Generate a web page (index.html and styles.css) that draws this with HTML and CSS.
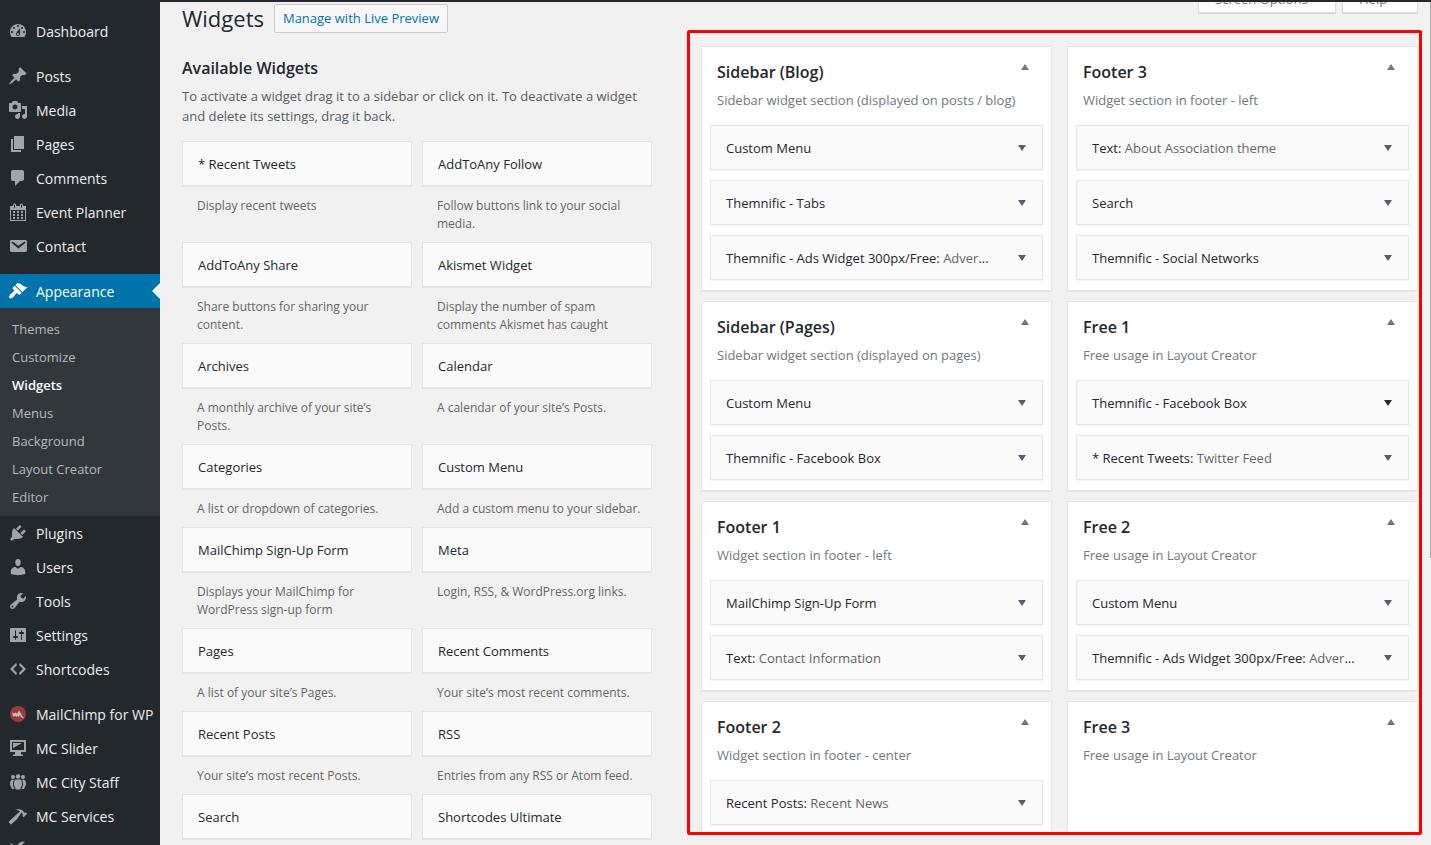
FILE: index.html
```html
<!DOCTYPE html>
<html lang="en">
<head>
<meta charset="utf-8">
<meta name="viewport" content="width=device-width, initial-scale=1">
<title>Widgets</title>
<link rel="stylesheet" href="styles.css">
</head>
<body>
<svg class="defs" aria-hidden="true">
  <symbol id="up" viewBox="0 0 8 6"><path d="M4 0l4 6H0z"/></symbol>
  <symbol id="down" viewBox="0 0 8 6"><path d="M0 0h8L4 6z"/></symbol>
</svg>
<div class="topbar"></div>
<div class="shell">
  <nav class="menu" aria-label="Main menu">
    <ul class="menu-group">
      <li><a class="menu-link" href="#"><svg viewBox="0 0 20 20"><path d="M3.76 16h12.48c1.1-1.37 1.76-3.11 1.76-5 0-4.42-3.58-8-8-8s-8 3.58-8 8c0 1.89.66 3.63 1.76 5zM10 4c.55 0 1 .45 1 1s-.45 1-1 1-1-.45-1-1 .45-1 1-1zM6 6c.55 0 1 .45 1 1s-.45 1-1 1-1-.45-1-1 .45-1 1-1zm8 0c.55 0 1 .45 1 1s-.45 1-1 1-1-.45-1-1 .45-1 1-1zm-5.37 5.55L12 7v6c0 1.1-.9 2-2 2s-2-.9-2-2c0-.57.24-1.08.63-1.45zM4 10c.55 0 1 .45 1 1s-.45 1-1 1-1-.45-1-1 .45-1 1-1zm12 0c.55 0 1 .45 1 1s-.45 1-1 1-1-.45-1-1 .45-1 1-1zm-5 3c0-.55-.45-1-1-1s-1 .45-1 1 .45 1 1 1 1-.45 1-1z"/></svg><span>Dashboard</span></a></li>
    </ul>
    <ul class="menu-group">
      <li><a class="menu-link" href="#"><svg viewBox="0 0 20 20"><path d="M10.44 3.02l1.82-1.82 6.36 6.35-1.83 1.82c-1.05-.68-2.48-.57-3.41.36l-.75.75c-.92.93-1.04 2.35-.35 3.41l-1.83 1.82-2.41-2.41-2.8 2.79c-.42.42-3.38 2.71-3.8 2.29s1.86-3.39 2.28-3.81l2.79-2.79L4.1 9.36l1.83-1.82c1.05.69 2.48.57 3.4-.36l.75-.75c.93-.92 1.05-2.35.36-3.41z"/></svg><span>Posts</span></a></li>
      <li><a class="menu-link" href="#"><svg viewBox="0 0 20 20"><path d="M13 11V4c0-.55-.45-1-1-1h-1.67L9 1H5L3.67 3H2c-.55 0-1 .45-1 1v7c0 .55.45 1 1 1h10c.55 0 1-.45 1-1zM7 4.500c1.380 0 2.500 1.120 2.500 2.500S8.380 9.500 7 9.500 4.500 8.380 4.500 7 5.620 4.500 7 4.500zM14 6h5v10.500c0 1.380-1.120 2.500-2.500 2.500S14 17.880 14 16.500s1.120-2.500 2.500-2.500c.17 0 .34.02.5.05V9h-3V6zm-4 8.050V13h2v3.500c0 1.380-1.120 2.500-2.500 2.500S7 17.880 7 16.500 8.120 14 9.500 14c.17 0 .34.02.5.05z"/></svg><span>Media</span></a></li>
      <li><a class="menu-link" href="#"><svg viewBox="0 0 20 20"><path d="M6 15V2h10v13H6zm-1 1h8v2H3V5h2v11z"/></svg><span>Pages</span></a></li>
      <li><a class="menu-link" href="#"><svg viewBox="0 0 20 20"><path d="M5 2h9c1.100 0 2 .9 2 2v7c0 1.100-.9 2-2 2h-2l-5 5v-5H5c-1.100 0-2-.9-2-2V4c0-1.100.9-2 2-2z"/></svg><span>Comments</span></a></li>
      <li><a class="menu-link" href="#"><svg viewBox="0 0 20 20"><path d="M15 4h3v15H2V4h3V3c0-.41.15-.76.44-1.06.29-.29.65-.44 1.06-.44s.77.15 1.06.44c.29.3.44.65.44 1.06v1h4V3c0-.41.15-.76.44-1.06.29-.29.65-.44 1.06-.44s.77.15 1.06.44c.29.3.44.65.44 1.06v1zM6 3v2.500c0 .14.05.26.15.36.09.09.21.14.35.14s.26-.05.35-.14c.1-.1.15-.22.15-.36V3c0-.14-.05-.26-.15-.35-.09-.1-.21-.15-.35-.15s-.26.05-.35.15c-.1.09-.15.21-.15.35zm7 0v2.500c0 .14.05.26.14.36.1.09.22.14.36.14s.26-.05.36-.14c.09-.1.14-.22.14-.36V3c0-.14-.05-.26-.14-.35-.1-.1-.22-.15-.36-.15s-.26.05-.36.15c-.09.09-.14.21-.14.35zm4 15V8H3v10h14zM7 9v2H5V9h2zm2 0h2v2H9V9zm4 2V9h2v2h-2zm-6 1v2H5v-2h2zm2 0h2v2H9v-2zm4 2v-2h2v2h-2zm-6 1v2H5v-2h2zm4 2H9v-2h2v2zm4 0h-2v-2h2v2z"/></svg><span>Event Planner</span></a></li>
      <li><a class="menu-link" href="#"><svg viewBox="0 0 20 20"><path d="M3.870 4h13.250C18.370 4 19 4.590 19 5.790v8.420c0 1.190-.63 1.790-1.880 1.790H3.870c-1.250 0-1.880-.6-1.880-1.790V5.790c0-1.200.63-1.790 1.880-1.790zm6.620 8.600l6.740-5.530c.24-.2.43-.66.13-1.070-.29-.41-.82-.42-1.170-.17l-5.700 3.860L4.800 5.830c-.35-.25-.88-.24-1.170.17-.3.41-.11.87.13 1.070z"/></svg><span>Contact</span></a></li>
    </ul>
    <ul class="menu-group">
      <li>
        <a class="menu-link current" href="#"><svg viewBox="0 0 20 20"><path d="M14.480 11.060L7.410 3.990l1.500-1.500c.5-.56 2.300-.47 3.510.32 1.210.8 1.430 1.280 2.910 2.100 1.180.64 2.450 1.260 4.450.85zm-.71.71L6.700 4.700 4.930 6.470c-.39.39-.39 1.020 0 1.410l1.060 1.060c.39.39.39 1.030 0 1.420-.6.6-1.430 1.110-2.210 1.690-.35.26-.7.53-1.010.84C1.430 14.230.4 16.080 1.400 17.070c.99 1 2.840-.03 4.180-1.360.31-.31.58-.66.85-1.020.57-.78 1.080-1.610 1.690-2.210.39-.39 1.020-.39 1.410 0l1.060 1.060c.39.39 1.020.39 1.410 0z"/></svg><span>Appearance</span></a>
        <ul class="submenu">
          <li><a href="#">Themes</a></li>
          <li><a href="#">Customize</a></li>
          <li><a class="selected" href="#" aria-current="page">Widgets</a></li>
          <li><a href="#">Menus</a></li>
          <li><a href="#">Background</a></li>
          <li><a href="#">Layout Creator</a></li>
          <li><a href="#">Editor</a></li>
        </ul>
      </li>
      <li><a class="menu-link" href="#"><svg viewBox="0 0 20 20"><path d="M13.110 4.360L9.870 7.600 8 5.730l3.240-3.240c.35-.34 1.050-.2 1.560.32.52.51.66 1.210.31 1.550zm-8 1.770l.91-1.120 9.010 9.010-1.190.84c-.71.71-2.630 1.160-3.820 1.160H6.140L4.900 17.260c-.59.59-1.540.59-2.120 0-.59-.58-.59-1.530 0-2.120l1.240-1.240v-3.880c0-1.130.4-3.190 1.090-3.890zm7.260 3.970l3.240-3.240c.34-.35 1.040-.21 1.550.31.52.51.66 1.210.31 1.550l-3.240 3.250z"/></svg><span>Plugins</span></a></li>
      <li><a class="menu-link" href="#"><svg viewBox="0 0 20 20"><path d="M10 9.250c-2.270 0-2.730-3.440-2.730-3.440C7 4.020 7.820 2 9.970 2c2.160 0 2.980 2.020 2.710 3.810 0 0-.41 3.440-2.680 3.440zm0 2.570L12.720 10c2.390 0 4.520 2.330 4.520 4.530v2.490s-3.650 1.130-7.240 1.130c-3.650 0-7.240-1.130-7.240-1.130v-2.490c0-2.250 1.940-4.480 4.470-4.480z"/></svg><span>Users</span></a></li>
      <li><a class="menu-link" href="#"><svg viewBox="0 0 20 20"><path d="M16.680 9.770c-1.340 1.340-3.300 1.670-4.950.99l-5.410 6.520c-.99.99-2.590.99-3.580 0s-.99-2.590 0-3.570l6.520-5.420c-.68-1.650-.35-3.610.99-4.950 1.280-1.280 3.120-1.620 4.720-1.060l-2.890 2.890 2.820 2.820 2.860-2.870c.53 1.580.18 3.390-1.080 4.650zM3.810 16.210c.4.39 1.040.39 1.430 0 .4-.4.4-1.040 0-1.430-.39-.4-1.030-.4-1.430 0-.39.39-.39 1.030 0 1.430z"/></svg><span>Tools</span></a></li>
      <li><a class="menu-link" href="#"><svg viewBox="0 0 20 20"><path d="M18 16V4c0-.55-.45-1-1-1H3c-.55 0-1 .45-1 1v12c0 .55.45 1 1 1h14c.55 0 1-.45 1-1zM8 11h1c.55 0 1 .45 1 1s-.45 1-1 1H8v1.500c0 .28-.22.5-.5.5s-.5-.22-.5-.5V13H6c-.55 0-1-.45-1-1s.45-1 1-1h1V5.500c0-.28.22-.5.5-.5s.5.22.5.5V11zm5-2h-1c-.55 0-1-.45-1-1s.45-1 1-1h1V5.500c0-.28.22-.5.5-.5s.5.22.5.5V7h1c.55 0 1 .45 1 1s-.45 1-1 1h-1v5.500c0 .28-.22.5-.5.5s-.5-.22-.5-.5V9z"/></svg><span>Settings</span></a></li>
      <li><a class="menu-link" href="#"><svg viewBox="0 0 20 20"><path d="M9 6l-4 4 4 4-1 2-6-6 6-6zm2 8l4-4-4-4 1-2 6 6-6 6z"/></svg><span>Shortcodes</span></a></li>
    </ul>
    <ul class="menu-group">
      <li><a class="menu-link" href="#"><svg viewBox="0 0 20 20"><circle cx="10" cy="10" r="8" fill="#9b3a3c"/><path d="M4 8.500l2 1 1.500-1 1.500 1.200 2-3.200 2 3 1 2.500 1.800 1.500-1 .8-2-1.500-1-2-.8 2.200-1.600-1.300-.9 1.500-1.500-1.700L6 12.800l-1-.6z" fill="#d0bcbd"/></svg><span>MailChimp for WP</span></a></li>
      <li><a class="menu-link" href="#"><svg viewBox="0 0 20 20"><path d="M2 2h16v12h-5v2l2 1v1H5v-1l2-1v-2H2zM4 4v8h12V4zM5 5h9L5 10z"/></svg><span>MC Slider</span></a></li>
      <li><a class="menu-link" href="#"><svg viewBox="0 0 20 20"><circle cx="5" cy="5" r="2"/><circle cx="10" cy="4.500" r="2.200"/><circle cx="15" cy="5" r="2"/><path d="M7.500 7.500h5c1 1 1.500 2.500 1.500 4.500 0 2-.7 3-1.200 3.500l-.6 2H7.800l-.6-2C6.700 15 6 14 6 12c0-2 .5-3.500 1.500-4.500zM3.800 7.800h2.700C5.300 9 5 10.500 5 12.200c0 1.800.5 3 1.300 3.800l.3 1H4l-.8-2C2.400 14.300 2 13 2 11.500s.6-3 1.800-3.700zM16.200 7.800h-2.700c1.200 1.200 1.500 2.700 1.500 4.400 0 1.800-.5 3-1.300 3.800l-.3 1H16l.8-2c.8-.7 1.200-2 1.200-3.500s-.6-3-1.800-3.700z"/></svg><span>MC City Staff</span></a></li>
      <li><a class="menu-link" href="#"><svg viewBox="0 0 20 20"><path d="M17.700 6.320l1.410 1.420-3.470 3.410-1.420-1.420.84-.82c-.32-.76-.81-1.570-1.510-2.310l-4.610 6.590-5.260 4.700c-.39.39-1.020.39-1.420 0l-1.200-1.210c-.39-.39-.39-1.020 0-1.410l10.970-9.920c-1.370-.86-3.210-1.460-5.670-1.480 2.700-.82 4.950-.93 6.580-.3 1.700.66 2.820 2.200 3.910 3.580z"/></svg><span>MC Services</span></a></li>
      <li><a class="menu-link" href="#"><svg viewBox="0 0 20 20"><path d="M2 3l4 2 2 4 3-6 3-1.500 3 .5-2.500 2v2L17 7l2-2v4l-3 3-3-1-6 7-3-3 3-4-3-4z"/></svg></a></li>
    </ul>
  </nav>

  <main class="content">
    <section class="available">
      <header class="page-head">
        <h1>Widgets</h1>
        <a class="preview" href="#">Manage with Live Preview</a>
      </header>
      <h2>Available Widgets</h2>
      <p class="intro">To activate a widget drag it to a sidebar or click on it. To deactivate a widget and delete its settings, drag it back.</p>
      <div class="catalog">
        <article><h3 class="widget">* Recent Tweets</h3><p>Display recent tweets</p></article>
        <article><h3 class="widget">AddToAny Follow</h3><p>Follow buttons link to your social media.</p></article>
        <article><h3 class="widget">AddToAny Share</h3><p>Share buttons for sharing your content.</p></article>
        <article><h3 class="widget">Akismet Widget</h3><p>Display the number of spam comments Akismet has caught</p></article>
        <article><h3 class="widget">Archives</h3><p>A monthly archive of your site’s Posts.</p></article>
        <article><h3 class="widget">Calendar</h3><p>A calendar of your site’s Posts.</p></article>
        <article><h3 class="widget">Categories</h3><p>A list or dropdown of categories.</p></article>
        <article><h3 class="widget">Custom Menu</h3><p>Add a custom menu to your sidebar.</p></article>
        <article><h3 class="widget">MailChimp Sign-Up Form</h3><p>Displays your MailChimp for WordPress sign-up form</p></article>
        <article><h3 class="widget">Meta</h3><p>Login, RSS, &amp; WordPress.org links.</p></article>
        <article><h3 class="widget">Pages</h3><p>A list of your site’s Pages.</p></article>
        <article><h3 class="widget">Recent Comments</h3><p>Your site’s most recent comments.</p></article>
        <article><h3 class="widget">Recent Posts</h3><p>Your site’s most recent Posts.</p></article>
        <article><h3 class="widget">RSS</h3><p>Entries from any RSS or Atom feed.</p></article>
        <article><h3 class="widget">Search</h3></article>
        <article><h3 class="widget">Shortcodes Ultimate</h3></article>
      </div>
    </section>

    <section class="areas">
      <div class="screen-tabs">
        <button class="tab tab-options" type="button">Screen Options</button>
        <button class="tab tab-help" type="button">Help</button>
      </div>
      <div class="frame">
        <div class="column">
          <section class="area">
            <header><h2>Sidebar (Blog)</h2><button type="button" aria-label="Collapse"><svg><use href="#up"/></svg></button></header>
            <p>Sidebar widget section (displayed on posts / blog)</p>
            <div class="widget"><h3>Custom Menu</h3><button type="button" aria-label="Expand"><svg><use href="#down"/></svg></button></div>
            <div class="widget"><h3>Themnific - Tabs</h3><button type="button" aria-label="Expand"><svg><use href="#down"/></svg></button></div>
            <div class="widget"><h3>Themnific - Ads Widget 300px/Free: <span>Adver</span>...</h3><button type="button" aria-label="Expand"><svg><use href="#down"/></svg></button></div>
          </section>
          <section class="area">
            <header><h2>Sidebar (Pages)</h2><button type="button" aria-label="Collapse"><svg><use href="#up"/></svg></button></header>
            <p>Sidebar widget section (displayed on pages)</p>
            <div class="widget"><h3>Custom Menu</h3><button type="button" aria-label="Expand"><svg><use href="#down"/></svg></button></div>
            <div class="widget"><h3>Themnific - Facebook Box</h3><button type="button" aria-label="Expand"><svg><use href="#down"/></svg></button></div>
          </section>
          <section class="area">
            <header><h2>Footer 1</h2><button type="button" aria-label="Collapse"><svg><use href="#up"/></svg></button></header>
            <p>Widget section in footer - left</p>
            <div class="widget"><h3>MailChimp Sign-Up Form</h3><button type="button" aria-label="Expand"><svg><use href="#down"/></svg></button></div>
            <div class="widget"><h3>Text: <span>Contact Information</span></h3><button type="button" aria-label="Expand"><svg><use href="#down"/></svg></button></div>
          </section>
          <section class="area last">
            <header><h2>Footer 2</h2><button type="button" aria-label="Collapse"><svg><use href="#up"/></svg></button></header>
            <p>Widget section in footer - center</p>
            <div class="widget"><h3>Recent Posts: <span>Recent News</span></h3><button type="button" aria-label="Expand"><svg><use href="#down"/></svg></button></div>
          </section>
        </div>
        <div class="column">
          <section class="area">
            <header><h2>Footer 3</h2><button type="button" aria-label="Collapse"><svg><use href="#up"/></svg></button></header>
            <p>Widget section in footer - left</p>
            <div class="widget"><h3>Text: <span>About Association theme</span></h3><button type="button" aria-label="Expand"><svg><use href="#down"/></svg></button></div>
            <div class="widget"><h3>Search</h3><button type="button" aria-label="Expand"><svg><use href="#down"/></svg></button></div>
            <div class="widget"><h3>Themnific - Social Networks</h3><button type="button" aria-label="Expand"><svg><use href="#down"/></svg></button></div>
          </section>
          <section class="area">
            <header><h2>Free 1</h2><button type="button" aria-label="Collapse"><svg><use href="#up"/></svg></button></header>
            <p>Free usage in Layout Creator</p>
            <div class="widget hovered"><h3>Themnific - Facebook Box</h3><button type="button" aria-label="Expand"><svg><use href="#down"/></svg></button></div>
            <div class="widget"><h3>* Recent Tweets: <span>Twitter Feed</span></h3><button type="button" aria-label="Expand"><svg><use href="#down"/></svg></button></div>
          </section>
          <section class="area">
            <header><h2>Free 2</h2><button type="button" aria-label="Collapse"><svg><use href="#up"/></svg></button></header>
            <p>Free usage in Layout Creator</p>
            <div class="widget"><h3>Custom Menu</h3><button type="button" aria-label="Expand"><svg><use href="#down"/></svg></button></div>
            <div class="widget"><h3>Themnific - Ads Widget 300px/Free: <span>Adver</span>...</h3><button type="button" aria-label="Expand"><svg><use href="#down"/></svg></button></div>
          </section>
          <section class="area last">
            <header><h2>Free 3</h2><button type="button" aria-label="Collapse"><svg><use href="#up"/></svg></button></header>
            <p>Free usage in Layout Creator</p>
          </section>
        </div>
      </div>
    </section>
  </main>
  <div class="scroll-edge"></div>
</div>
</body>
</html>
```

FILE: styles.css
```css
* { box-sizing: border-box; }

body {
  margin: 0;
  height: 100vh;
  overflow: hidden;
  display: flex;
  flex-direction: column;
  background: #f1f1f1;
  color: #555d66;
  font: 13px/20px "Open Sans", "Noto Sans", sans-serif;
}

h1, h2, h3, p, ul { margin: 0; padding: 0; }
ul { list-style: none; }
a { text-decoration: none; }
button { font: inherit; cursor: pointer; }
.defs { position: absolute; width: 0; height: 0; }

.topbar { flex: none; height: 2px; background: #23282d; }
.shell { flex: 1; min-height: 0; display: flex; overflow: hidden; }

/* Admin menu */
.menu {
  flex: none;
  width: 160px;
  padding-top: 12px;
  background: #23282d;
  overflow: hidden;
}
.menu-group { margin-bottom: 11px; }
.menu-link {
  position: relative;
  display: flex;
  align-items: center;
  gap: 8px;
  height: 34px;
  padding-left: 8px;
  color: #eee;
  font-size: 14px;
  white-space: nowrap;
}
.menu-link svg {
  flex: none;
  width: 20px;
  height: 20px;
  fill: #a0a5aa;
  fill-rule: evenodd;
}
.menu-link span { padding-top: 2px; }
.menu-link.current { background: #0073aa; color: #fff; }
.menu-link.current svg { fill: #fff; }
.menu-link.current::after {
  content: "";
  position: absolute;
  right: 0;
  top: 9px;
  border: 8px solid transparent;
  border-left-width: 0;
  border-right-color: #f1f1f1;
}
.submenu { padding: 7px 0 5px; background: #32373c; }
.submenu a {
  display: block;
  padding: 4px 12px;
  color: #b4b9be;
}
.submenu .selected { color: #fff; font-weight: 600; }

/* Content */
.content {
  flex: 1;
  min-width: 0;
  display: grid;
  grid-template-columns: 470fr 735fr;
  grid-template-rows: minmax(0, 1fr);
  gap: 35px;
  padding: 0 8px 0 22px;
}
.available { min-width: 0; }
.page-head { display: flex; align-items: center; gap: 10px; padding-top: 2px; }
h1 { color: #23282d; font-size: 22px; line-height: 29px; font-weight: 400; }
.preview {
  padding: 4px 8px;
  border: 1px solid #ccc;
  border-radius: 2px;
  background: #f7f7f7;
  color: #0073aa;
  font-weight: 500;
  line-height: 19px;
}
.available h2 { margin-top: 25px; }
h2 { color: #23282d; font-size: 16px; line-height: 20px; font-weight: 600; }
.intro { margin: 8px 0 15px; }

.catalog { display: grid; grid-template-columns: 1fr 1fr; column-gap: 10px; }
.widget {
  display: flex;
  align-items: center;
  height: 45px;
  padding: 0 15px;
  border: 1px solid #e5e5e5;
  background: #fafafa;
  box-shadow: 0 1px 1px rgba(0, 0, 0, .04);
  color: #23282d;
  font-size: 13px;
  font-weight: 500;
  white-space: nowrap;
}
.catalog p {
  padding: 11px 9px 9px 15px;
  color: #666;
  font-size: 12px;
  line-height: 18px;
}

/* Widget areas */
.areas { min-width: 0; min-height: 0; display: flex; flex-direction: column; }
.screen-tabs {
  flex: none;
  display: flex;
  justify-content: flex-end;
  gap: 6px;
  margin: -17px 4px 17px 0;
}
.tab {
  height: 28px;
  padding: 0 16px;
  border: 1px solid #ddd;
  border-top: 0;
  background: #fff;
  box-shadow: 0 1px 1px rgba(0, 0, 0, .1);
  color: #72777c;
  text-align: left;
}
.tab-options { width: 138px; }
.tab-help { width: 76px; }

.frame {
  flex: 1;
  min-height: 0;
  display: grid;
  grid-template-columns: 1fr 1fr;
  grid-template-rows: minmax(0, 1fr);
  gap: 15px;
  margin-bottom: 10px;
  padding: 13px 1px 0 11px;
  border: 3px solid #f00;
  border-radius: 2px;
  overflow: hidden;
}
.column { min-width: 0; min-height: 0; display: flex; flex-direction: column; gap: 10px; }
.area {
  flex: none;
  display: flex;
  flex-direction: column;
  padding: 0 8px 10px;
  border: 1px solid #e5e5e5;
  background: #fff;
  box-shadow: 0 1px 1px rgba(0, 0, 0, .04);
}
.area.last { flex: 1 0 auto; border-bottom: 0; }
.area header { display: flex; justify-content: space-between; padding: 15px 10px 0 7px; }
.area header button { height: 10px; color: #72777c; }
.area p { padding: 8px 7px 15px; color: #72777c; white-space: nowrap; }
.area button {
  flex: none;
  display: flex;
  align-items: center;
  padding: 0 4px;
  border: 0;
  background: none;
  color: #555d66;
}
.area button svg { width: 8px; height: 6px; fill: currentColor; }
.area .widget { justify-content: space-between; padding-right: 12px; }
.area .widget + .widget { margin-top: 10px; }
.widget h3 { min-width: 0; font-size: 13px; font-weight: 500; overflow: hidden; text-overflow: ellipsis; }
.widget span { color: #666; }
.area .hovered button { color: #23282d; }

.scroll-edge {
  flex: none;
  width: 1px;
  background: linear-gradient(#b0b0b0 66%, #f1f1f1 66%);
}
```
